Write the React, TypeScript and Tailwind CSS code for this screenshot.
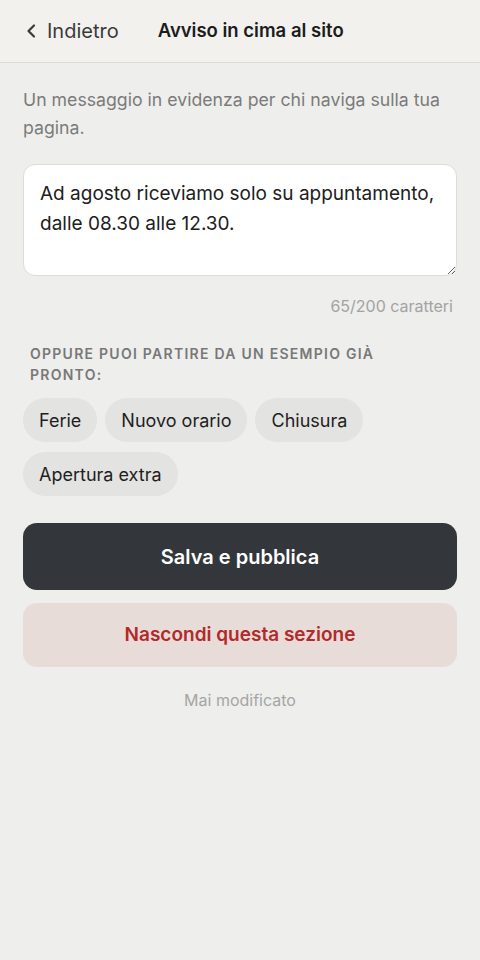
import { useState } from "react";

const chips = ["Ferie", "Nuovo orario", "Chiusura", "Apertura extra"];

export default function App() {
  const [text, setText] = useState(
    "Ad agosto riceviamo solo su appuntamento, dalle 08.30 alle 12.30."
  );

  return (
    <div className="min-h-[960px] w-full bg-[#eeeeec] font-['Inter',sans-serif] text-[#1f1f1f]">
      <header className="flex h-[63px] items-center border-b border-[#dcdbd7] bg-[#f2f1ed] px-[25px]">
        <button className="flex items-center gap-[8px] text-[20px] text-[#3a3a3a]">
          <svg width="14" height="16" viewBox="0 0 14 16" fill="none">
            <path d="M9 2.5 3.5 8 9 13.5" stroke="#3a3a3a" strokeWidth="2.2" strokeLinecap="round" strokeLinejoin="round" />
          </svg>
          Indietro
        </button>
        <h1 className="ml-[39px] text-[18.5px] font-semibold text-[#1c1c1c]">Avviso in cima al sito</h1>
      </header>

      <main className="px-[23px] pt-[23px]">
        <p className="text-[17.7px] leading-[28px] text-[#7b7b7b]">
          Un messaggio in evidenza per chi naviga sulla tua pagina.
        </p>

        <textarea
          value={text}
          onChange={(e) => setText(e.target.value)}
          className="mt-[22px] block h-[112px] w-full rounded-[12px] border border-[#dddddb] bg-white px-[16px] py-[14px] text-[19px] leading-[30px] text-[#202020] outline-none"
        />

        <div className="mt-[18px] pr-[4px] text-right text-[16px] text-[#a3a3a3]">
          {text.length}/200 caratteri
        </div>

        <div className="mt-[25px] px-[7px] text-[14px] font-semibold uppercase leading-[21px] tracking-[0.09em] text-[#787878]">
          Oppure puoi partire da un esempio già pronto:
        </div>

        <div className="mt-[13px] flex flex-wrap gap-x-[8px] gap-y-[10px]">
          {chips.map((c) => (
            <button
              key={c}
              onClick={() => setText(c)}
              className="h-[44px] rounded-full bg-[#e3e3e1] px-[16px] text-[18px] text-[#1e1e1e]"
            >
              {c}
            </button>
          ))}
        </div>

        <button className="mt-[27px] flex h-[67px] w-full items-center justify-center rounded-[14px] bg-[#33373b] text-[20px] font-semibold text-white">
          Salva e pubblica
        </button>

        <button className="mt-[13px] flex h-[64px] w-full items-center justify-center rounded-[14px] bg-[#e8dcd9] text-[19px] font-semibold text-[#b22a29]">
          Nascondi questa sezione
        </button>

        <div className="mt-[21px] text-center text-[16px] text-[#a5a5a5]">Mai modificato</div>
      </main>
    </div>
  );
}
